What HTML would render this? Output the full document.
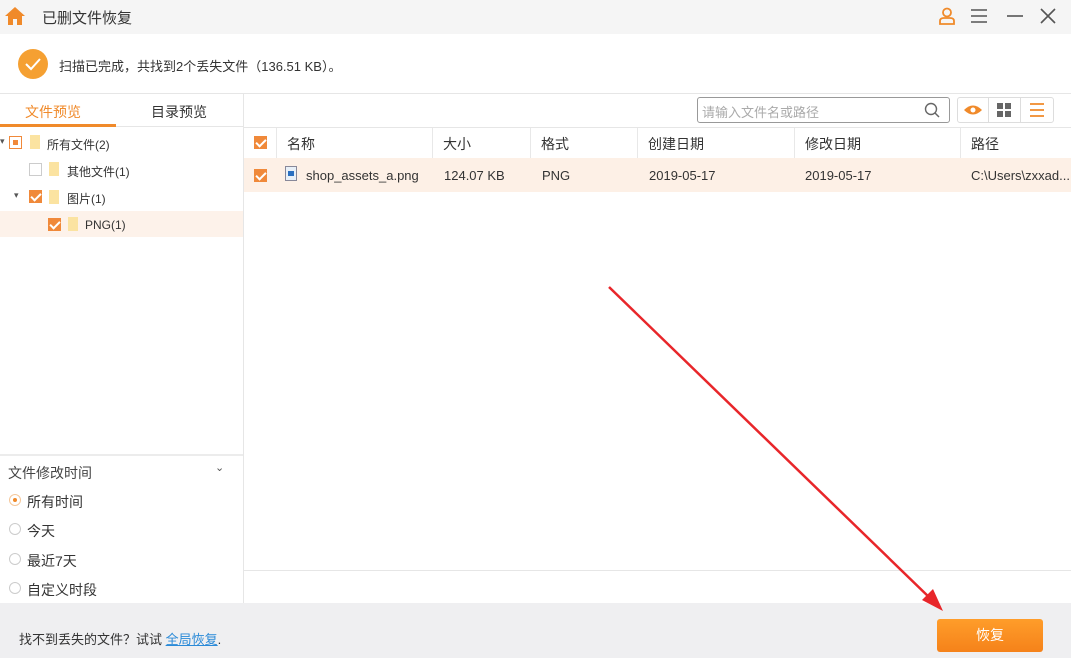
<!DOCTYPE html>
<html><head><meta charset="utf-8"><style>
*{margin:0;padding:0;box-sizing:border-box}
body{width:1071px;height:658px;overflow:hidden;background:#fff;font-family:"Liberation Sans","Noto Sans CJK SC",sans-serif;font-size:13px;color:#333;position:relative}
.a{position:absolute}
.cb{position:absolute;width:13px;height:13px;border:1px solid #ccc;background:#fff}
.cb.on{background:#f0893a;border-color:#f0893a}
.cb.on:after{content:"";position:absolute;left:3px;top:0px;width:4px;height:8px;border:solid #fff;border-width:0 2px 2px 0;transform:rotate(45deg)}
.fold{position:absolute;width:10px;height:14px;background:#fbe3a1}
.rad{position:absolute;width:12px;height:12px;border:1px solid #ccc;border-radius:50%;background:#fff}
</style></head><body>
<div class="a" style="left:0;top:0;width:1071px;height:34px;background:#f5f5f5"></div>
<svg class="a" style="left:4px;top:5px" width="22" height="22" viewBox="0 0 22 22"><path d="M11 2 L21 11 H18 V20 H13 V14 H9 V20 H4 V11 H1 Z" fill="#f08a2a"/></svg>
<div class="a" style="left:42px;top:7px;font-size:15px;color:#333">已删文件恢复</div>
<svg class="a" style="left:937px;top:6px" width="20" height="20" viewBox="0 0 20 20"><circle cx="10" cy="6.5" r="4" fill="none" stroke="#f08a2a" stroke-width="1.8"/><path d="M3 18 V15 Q3 12 7 12 H13 Q17 12 17 15 V18 Z" fill="none" stroke="#f08a2a" stroke-width="1.8"/></svg>
<svg class="a" style="left:970px;top:8px" width="18" height="16"><path d="M1 2H17M1 8H17M1 14H17" stroke="#555" stroke-width="1.6"/></svg>
<svg class="a" style="left:1006px;top:8px" width="18" height="16"><path d="M1 8H17" stroke="#555" stroke-width="1.6"/></svg>
<svg class="a" style="left:1040px;top:8px" width="16" height="16"><path d="M1 1L15 15M15 1L1 15" stroke="#555" stroke-width="1.6"/></svg>
<svg class="a" style="left:17px;top:48px" width="32" height="32"><circle cx="16" cy="16" r="15" fill="#f5a032"/><path d="M9 16 L14 21 L23 11" fill="none" stroke="#fff" stroke-width="2"/></svg>
<div class="a" style="left:59px;top:56px;font-size:13px">扫描已完成，共找到2个丢失文件（136.51 KB）。</div>
<div class="a" style="left:0;top:93px;width:1071px;height:1px;background:#e6e6e6"></div>
<div class="a" style="left:243px;top:94px;width:1px;height:509px;background:#e6e6e6"></div>
<div class="a" style="left:25px;top:102px;font-size:14px;color:#f08a2a">文件预览</div>
<div class="a" style="left:151px;top:102px;font-size:14px;color:#333">目录预览</div>
<div class="a" style="left:0;top:124px;width:116px;height:3px;background:#f08a2a"></div>
<div class="a" style="left:116px;top:126px;width:127px;height:1px;background:#e6e6e6"></div>
<div class="a" style="left:0;top:136px;font-size:9px;color:#555">▾</div>
<div class="cb" style="left:9px;top:136px;border-color:#f0893a"><div style="position:absolute;left:3px;top:3px;width:5px;height:5px;background:#f0893a"></div></div>
<div class="fold" style="left:30px;top:135px"></div>
<div class="a" style="left:47px;top:136px;font-size:12px">所有文件(2)</div>
<div class="cb" style="left:29px;top:163px"></div>
<div class="fold" style="left:49px;top:162px"></div>
<div class="a" style="left:67px;top:163px;font-size:12px">其他文件(1)</div>
<div class="a" style="left:14px;top:190px;font-size:9px;color:#555">▾</div>
<div class="cb on" style="left:29px;top:190px"></div>
<div class="fold" style="left:49px;top:190px"></div>
<div class="a" style="left:67px;top:190px;font-size:12px">图片(1)</div>
<div class="a" style="left:0;top:211px;width:243px;height:26px;background:#fdf2ea"></div>
<div class="cb on" style="left:48px;top:218px"></div>
<div class="fold" style="left:68px;top:217px"></div>
<div class="a" style="left:85px;top:218px;font-size:12px">PNG(1)</div>
<div class="a" style="left:0;top:454px;width:243px;height:2px;background:#ececec"></div>
<div class="a" style="left:8px;top:463px;font-size:14px;color:#444">文件修改时间</div>
<div class="a" style="left:215px;top:461px;font-size:11px;color:#555">⌄</div>
<div class="rad" style="left:9px;top:494px;border-color:#f5c79a"><div style="position:absolute;left:3px;top:3px;width:4px;height:4px;border-radius:50%;background:#f08a2a"></div></div>
<div class="a" style="left:27px;top:492px;font-size:14px">所有时间</div>
<div class="rad" style="left:9px;top:523px"></div><div class="a" style="left:27px;top:521px;font-size:14px">今天</div>
<div class="rad" style="left:9px;top:553px"></div><div class="a" style="left:27px;top:551px;font-size:14px">最近7天</div>
<div class="rad" style="left:9px;top:582px"></div><div class="a" style="left:27px;top:580px;font-size:14px">自定义时段</div>
<div class="a" style="left:697px;top:97px;width:253px;height:26px;border:1px solid #999;border-radius:3px"></div>
<div class="a" style="left:702px;top:102px;font-size:13px;color:#aaa">请输入文件名或路径</div>
<svg class="a" style="left:924px;top:102px" width="17" height="17"><circle cx="7" cy="7" r="5.5" fill="none" stroke="#666" stroke-width="1.4"/><path d="M11 11L15 15" stroke="#666" stroke-width="1.5"/></svg>
<div class="a" style="left:957px;top:97px;width:97px;height:26px;border:1px solid #ddd;border-radius:3px"></div>
<div class="a" style="left:988px;top:98px;width:1px;height:24px;background:#ddd"></div>
<div class="a" style="left:1020px;top:98px;width:1px;height:24px;background:#ddd"></div>
<svg class="a" style="left:963px;top:104px" width="20" height="12"><path d="M1 6 Q10 -3 19 6 Q10 15 1 6Z" fill="#f08a2a"/><circle cx="10" cy="6" r="2.5" fill="#fff"/></svg>
<svg class="a" style="left:997px;top:103px" width="14" height="14"><rect x="0" y="0" width="6" height="6" fill="#666"/><rect x="8" y="0" width="6" height="6" fill="#666"/><rect x="0" y="8" width="6" height="6" fill="#666"/><rect x="8" y="8" width="6" height="6" fill="#666"/></svg>
<svg class="a" style="left:1029px;top:102px" width="16" height="16"><path d="M1 2H15M1 8H15M1 14H15" stroke="#f08a2a" stroke-width="1.8"/></svg>
<div class="a" style="left:244px;top:127px;width:827px;height:1px;background:#e6e6e6"></div>
<div class="a" style="left:244px;top:158px;width:827px;height:34px;background:#fdf0e6"></div>
<div class="cb on" style="left:254px;top:136px"></div>
<div class="a" style="left:276px;top:128px;width:1px;height:30px;background:#e8e8e8"></div>
<div class="a" style="left:287px;top:134px;font-size:14px">名称</div>
<div class="a" style="left:432px;top:128px;width:1px;height:30px;background:#e8e8e8"></div>
<div class="a" style="left:443px;top:134px;font-size:14px">大小</div>
<div class="a" style="left:530px;top:128px;width:1px;height:30px;background:#e8e8e8"></div>
<div class="a" style="left:541px;top:134px;font-size:14px">格式</div>
<div class="a" style="left:637px;top:128px;width:1px;height:30px;background:#e8e8e8"></div>
<div class="a" style="left:648px;top:134px;font-size:14px">创建日期</div>
<div class="a" style="left:794px;top:128px;width:1px;height:30px;background:#e8e8e8"></div>
<div class="a" style="left:805px;top:134px;font-size:14px">修改日期</div>
<div class="a" style="left:960px;top:128px;width:1px;height:30px;background:#e8e8e8"></div>
<div class="a" style="left:971px;top:134px;font-size:14px">路径</div>
<div class="cb on" style="left:254px;top:169px"></div>
<svg class="a" style="left:285px;top:166px" width="12" height="15"><rect x="0.5" y="0.5" width="11" height="14" fill="#e8f0f8" stroke="#889"/><rect x="3" y="5" width="6" height="5" fill="#2a6fc0"/></svg>
<div class="a" style="left:306px;top:168px;font-size:13px">shop_assets_a.png</div>
<div class="a" style="left:444px;top:168px;font-size:13px">124.07 KB</div>
<div class="a" style="left:542px;top:168px;font-size:13px">PNG</div>
<div class="a" style="left:649px;top:168px;font-size:13px">2019-05-17</div>
<div class="a" style="left:805px;top:168px;font-size:13px">2019-05-17</div>
<div class="a" style="left:971px;top:168px;font-size:13px">C:\Users\zxxad...</div>
<div class="a" style="left:244px;top:570px;width:827px;height:1px;background:#e6e6e6"></div>
<div class="a" style="left:0;top:603px;width:1071px;height:55px;background:#efeff1"></div>
<div class="a" style="left:19px;top:629px;font-size:13px">找不到丢失的文件？试试 <span style="color:#2a8ad8;text-decoration:underline">全局恢复</span>.</div>
<div class="a" style="left:937px;top:619px;width:106px;height:33px;border-radius:3px;background:linear-gradient(#ff9d2a,#f5821a);color:#fff;font-size:14px;text-align:center;line-height:33px">恢复</div>
<svg class="a" style="left:0;top:0" width="1071" height="658"><path d="M609 287 L932 600" stroke="#e8262a" stroke-width="2.5"/><path d="M943 611 L922 600 L933 589 Z" fill="#e8262a"/></svg>
</body></html>
